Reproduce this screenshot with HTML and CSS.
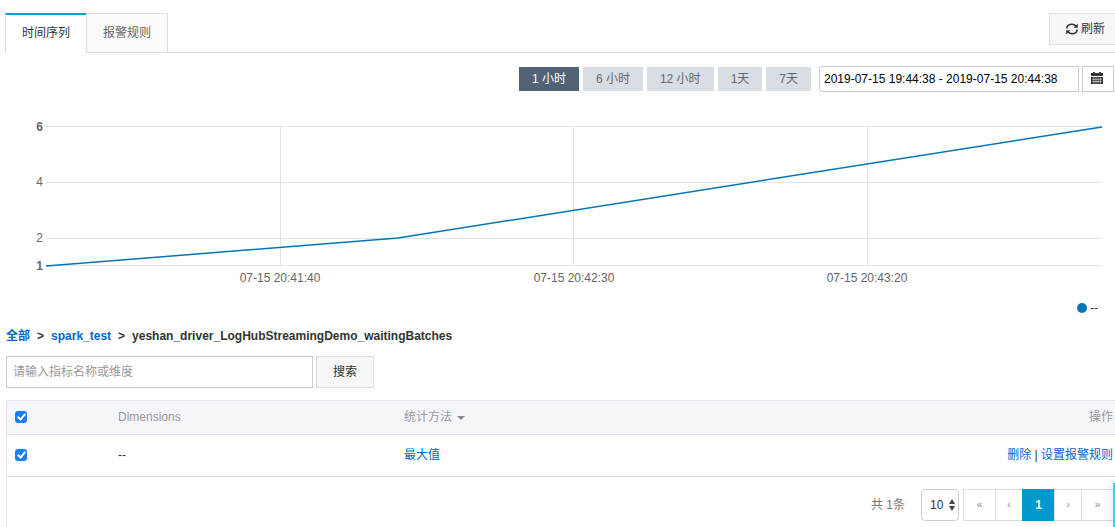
FILE: index.html
```html
<!DOCTYPE html>
<html lang="zh-CN">
<head>
<meta charset="utf-8">
<title>时间序列</title>
<link rel="stylesheet" href="styles.css">
</head>
<body>
<header class="topbar">
  <nav class="tabs">
    <button class="tab tab-active" type="button">时间序列</button>
    <button class="tab" type="button">报警规则</button>
  </nav>
  <button class="refresh" type="button">
    <svg width="12" height="12" viewBox="0 0 12 12" aria-hidden="true">
      <path fill="none" stroke="currentColor" stroke-width="1.6" d="M.9 5.500V5Q1.300 1.300 6 1.200Q8.400 1.200 10 3.200M11.100 6.500V7Q10.700 10.700 6 10.800Q3.600 10.800 2 8.800"/>
      <path fill="currentColor" d="M11.800 .6V4.800H7.600zM.2 11.400V7.200H4.400z"/>
    </svg>
    <span>刷新</span>
  </button>
</header>

<main>
  <div class="toolbar">
    <div class="ranges">
      <button class="range range-active" type="button">1 小时</button>
      <button class="range" type="button">6 小时</button>
      <button class="range" type="button">12 小时</button>
      <button class="range" type="button">1天</button>
      <button class="range" type="button">7天</button>
    </div>
    <input class="period" type="text" aria-label="时间范围" value="2019-07-15 19:44:38 - 2019-07-15 20:44:38">
    <button class="calendar" type="button" aria-label="选择日期">
      <svg width="12" height="12" viewBox="0 0 12 12" aria-hidden="true">
        <path fill="#333" d="M0 1h2V0h2v1h4V0h2v1h2v3H0zM0 5h12v7H0z"/>
        <path stroke="#fff" stroke-width=".5" d="M1 7.300h10M1 9.600h10M2.800 5.500v6M5 5.500v6M7.200 5.500v6M9.400 5.500v6"/>
      </svg>
    </button>
  </div>

  <svg class="chart" viewBox="0 0 1115 180" role="img" aria-label="waitingBatches">
    <path class="grid" d="M46 14.500H1102M46 70.500H1102M46 126.500H1102M46 153.500H1102M280.500 14V153M573.500 14V153M867.500 14V153"/>
    <path class="series" d="M46 154L398 126L1102 15"/>
    <g class="axis axis-y">
      <text class="extreme" x="43" y="19">6</text>
      <text x="43" y="74">4</text>
      <text x="43" y="130">2</text>
      <text class="extreme" x="43" y="158">1</text>
    </g>
    <g class="axis axis-x">
      <text x="280" y="170">07-15 20:41:40</text>
      <text x="574" y="170">07-15 20:42:30</text>
      <text x="867" y="170">07-15 20:43:20</text>
    </g>
  </svg>
  <div class="legend"><span class="dot"></span>--</div>

  <nav class="crumbs">
    <a href="#">全部</a><span>&gt;</span><a href="#">spark_test</a><span>&gt;</span><strong>yeshan_driver_LogHubStreamingDemo_waitingBatches</strong>
  </nav>

  <form class="search">
    <input class="query" type="text" aria-label="指标名称或维度" placeholder="请输入指标名称或维度">
    <button class="submit" type="button">搜索</button>
  </form>

  <section class="panel">
    <table class="metrics">
      <thead>
        <tr>
          <th class="col-check"><input type="checkbox" aria-label="全选" checked></th>
          <th class="col-dim">Dimensions</th>
          <th>统计方法<span class="caret"></span></th>
          <th class="col-actions">操作</th>
        </tr>
      </thead>
      <tbody>
        <tr>
          <td><input type="checkbox" aria-label="选择" checked></td>
          <td>--</td>
          <td><a href="#">最大值</a></td>
          <td class="col-actions"><a href="#">删除</a> | <a href="#">设置报警规则</a></td>
        </tr>
      </tbody>
    </table>
    <footer class="pager">
      <span class="total">共 1条</span>
      <span class="size">
        <select aria-label="每页条数"><option>10</option></select>
        <svg class="arrows" width="6" height="12" viewBox="0 0 6 12" aria-hidden="true"><path fill="#444" d="M0 5L3 0L6 5zM0 7H6L3 12z"/></svg>
      </span>
      <nav class="pages">
        <button class="page" type="button">«</button>
        <button class="page page-step" type="button">‹</button>
        <button class="page page-active" type="button">1</button>
        <button class="page page-step" type="button">›</button>
        <button class="page" type="button">»</button>
      </nav>
    </footer>
  </section>
</main>
<div class="dock"></div>
</body>
</html>
```
FILE: styles.css
```css
*, *::before { box-sizing: border-box; }
html { overflow: hidden; }
body {
  margin: 0;
  background: #fff;
  color: #333;
  font: 12px/18px "Liberation Sans", "Noto Sans CJK SC", sans-serif;
}
button, input, select { margin: 0; font: inherit; color: inherit; border-radius: 0; }
a { color: #06c; text-decoration: none; }

.topbar {
  display: flex;
  justify-content: space-between;
  align-items: flex-start;
  margin-left: 5px;
  padding-top: 13px;
  border-bottom: 1px solid #ddd;
}
.tabs { display: flex; margin-bottom: -1px; }
.tab {
  height: 40px;
  padding: 0 16px;
  background: #fafaf8;
  border: 1px solid #ddd;
  color: #666;
}
.tab-active {
  padding-bottom: 1px;
  background: #fff;
  border-top: 2px solid #00a0c6;
  border-right: 0;
  border-bottom-color: #fff;
  color: #333;
}
.refresh {
  display: flex;
  align-items: center;
  gap: 3px;
  height: 32px;
  padding: 0 10px 0 16px;
  background: #f7f7f7;
  border: 1px solid #ddd;
  border-right: 0;
}

.toolbar {
  display: flex;
  justify-content: flex-end;
  align-items: center;
  gap: 3px;
  padding: 13px 1px 0 0;
}
.ranges { display: flex; gap: 4px; margin-right: 5px; }
.range {
  height: 24px;
  padding: 0 13px;
  background: #d9dee4;
  border: 0;
  color: #666;
}
.range-active { background: #526378; color: #fff; }
.period {
  width: 260px;
  height: 26px;
  padding: 0 4px;
  border: 1px solid #ccc;
  border-radius: 3px 0 0 3px;
  color: #000;
}
.calendar {
  display: grid;
  place-items: center;
  width: 32px;
  height: 26px;
  padding: 0 2px 3px 0;
  background: #fff;
  border: 1px solid #ccc;
}

.chart { display: block; width: 100%; margin-top: 20px; }
.grid { fill: none; stroke: #e3e3e3; }
.series { fill: none; stroke: #0077b3; stroke-width: 1.5; }
.axis { fill: #666; }
.axis-y { text-anchor: end; }
.axis-x { text-anchor: middle; }
.extreme { font-weight: bold; }
.legend {
  display: flex;
  justify-content: flex-end;
  align-items: center;
  gap: 3px;
  margin-top: 7px;
  padding-right: 17px;
}
.dot { width: 10px; height: 10px; border-radius: 50%; background: #0077b3; }

.crumbs { display: flex; gap: 7px; margin: 10px 0 0 6px; font-weight: bold; }

.search { display: flex; gap: 3px; margin: 11px 0 12px 6px; }
.query {
  width: 307px;
  height: 32px;
  padding: 0 6px;
  border: 1px solid #ccc;
}
.query::placeholder { color: #999; }
.submit {
  height: 32px;
  padding: 0 16px;
  background: #f7f7f7;
  border: 1px solid #ddd;
}

.panel { margin-left: 6px; border: 1px solid #e1e6eb; border-width: 1px 0 0 1px; }
.metrics { width: 100%; border-collapse: collapse; }
th, td { padding: 0 2px 0 8px; text-align: left; border-bottom: 1px solid #ddd; }
th { height: 33px; background: #f5f6fa; border-color: #e1e6eb; color: #999; font-weight: normal; }
td { height: 42px; }
.col-check { width: 103px; }
.col-dim { width: 286px; }
.col-actions { text-align: right; }
input[type="checkbox"] {
  display: grid;
  place-items: center;
  appearance: none;
  width: 12px;
  height: 12px;
  border-radius: 3px;
  background: #147efb;
}
input[type="checkbox"]::before {
  content: "";
  width: 5px;
  height: 8px;
  margin-bottom: 2px;
  border: solid #fff;
  border-width: 0 2px 2px 0;
  transform: rotate(40deg);
}
.caret {
  display: inline-block;
  margin-left: 5px;
  border: 4px solid transparent;
  border-top-color: #888;
  border-bottom: 0;
  vertical-align: middle;
}

.pager {
  display: flex;
  justify-content: flex-end;
  align-items: center;
  height: 56px;
  padding-right: 1px;
}
.total { margin-right: 16px; color: #777; }
.size { position: relative; margin-right: 4px; }
.size select {
  display: block;
  appearance: none;
  width: 38px;
  height: 32px;
  padding: 0 0 0 8px;
  background: #fff;
  border: 1px solid #ccc;
  border-radius: 4px;
}
.arrows { position: absolute; right: 4px; top: 10px; pointer-events: none; }
.pages { display: flex; }
.page {
  width: 32px;
  height: 32px;
  padding: 0;
  background: #fff;
  border: 1px solid #ddd;
  border-right: 0;
  color: #888;
  font-size: 10px;
}
.page:last-child { width: 33px; border-right: 1px solid #ddd; }
.page-step { width: 27px; }
.page-active { background: #09c; border-color: #09c; color: #fff; font-size: 12px; font-weight: bold; }
.dock {
  position: fixed;
  right: 0;
  bottom: 0;
  width: 2px;
  height: 44px;
  background: #2ddbe8;
  box-shadow: 0 0 8px rgba(0, 0, 0, .3);
}
```
